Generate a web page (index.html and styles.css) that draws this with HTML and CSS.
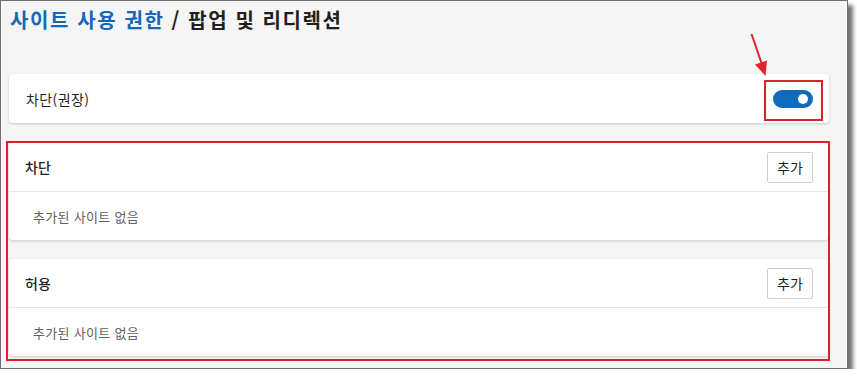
FILE: index.html
```html
<!DOCTYPE html>
<html lang="ko">
<head>
<meta charset="utf-8">
<title>팝업 및 리디렉션</title>
<link rel="stylesheet" href="styles.css">
</head>
<body>
<div class="window">
  <h1 class="title"><span class="crumb">사이트 사용 권한</span> / 팝업 및 리디렉션</h1>

  <div class="card setting">
    <span class="setting-label">차단(권장)</span>
    <span class="toggle" role="switch" aria-checked="true"><span class="knob"></span></span>
  </div>

  <section class="card list first">
    <div class="list-head">
      <span class="list-title">차단</span>
      <button class="add-btn" type="button">추가</button>
    </div>
    <div class="list-body">추가된 사이트 없음</div>
  </section>

  <section class="card list second">
    <div class="list-head">
      <span class="list-title">허용</span>
      <button class="add-btn" type="button">추가</button>
    </div>
    <div class="list-body">추가된 사이트 없음</div>
  </section>

  <div class="mark mark-toggle"></div>
  <div class="mark mark-lists"></div>
  <svg class="arrow" width="30" height="50" viewBox="745 34 30 50" aria-hidden="true">
    <line x1="751.5" y1="34" x2="761.5" y2="63" stroke="#e0242b" stroke-width="2"/>
    <polygon points="765.5,76 767,60.5 755,64.6" fill="#e0242b"/>
  </svg>
</div>
</body>
</html>
```

FILE: styles.css
```css
* { box-sizing: border-box; }

html, body {
  margin: 0;
  padding: 0;
  background: #ffffff;
}

body {
  font-family: "Noto Sans CJK KR", "Noto Sans", sans-serif;
  color: #1f1f1f;
}

.window {
  position: relative;
  width: 848px;
  height: 369px;
  border: 1px solid #707070;
  background: #f5f5f5;
  box-shadow: 5px 5px 4px rgba(0, 0, 0, 0.55);
  padding: 5px 18px 0 8px;
  overflow: visible;
}

.title {
  margin: 0;
  padding-left: 1px;
  font-size: 20px;
  line-height: 28px;
  font-weight: 700;
  letter-spacing: 1.6px;
  color: #1f1f1f;
  white-space: nowrap;
}

.crumb {
  color: #1667b7;
}

.card {
  background: #ffffff;
  border-radius: 4px;
  box-shadow: 0 1px 3px rgba(0, 0, 0, 0.18);
}

.setting {
  margin-top: 40px;
  height: 49px;
  display: flex;
  align-items: center;
  justify-content: space-between;
  padding: 0 16px 0 17px;
}

.setting-label {
  font-size: 14px;
  line-height: 20px;
  letter-spacing: 0.4px;
}

.toggle {
  position: relative;
  display: block;
  width: 40px;
  height: 18px;
  border-radius: 9px;
  background: #0f6cbd;
}

.knob {
  position: absolute;
  right: 5px;
  top: 4px;
  width: 10px;
  height: 10px;
  border-radius: 50%;
  background: #ffffff;
}

.list.first { margin-top: 20px; }
.list.second { margin-top: 19px; }

.list-head {
  height: 49px;
  display: flex;
  align-items: center;
  justify-content: space-between;
  padding: 0 16px 0 16px;
  border-bottom: 1px solid #e6e6e6;
}

.list-title {
  font-size: 14px;
  line-height: 20px;
  font-weight: 500;
}

.add-btn {
  width: 46px;
  height: 31px;
  padding: 0;
  border: 1px solid #cfcfcf;
  border-radius: 2px;
  background: #ffffff;
  font-family: inherit;
  font-size: 14px;
  line-height: 20px;
  color: #1f1f1f;
}

.list-body {
  height: 48px;
  display: flex;
  align-items: center;
  padding-left: 24px;
  font-size: 13px;
  letter-spacing: 0.3px;
  color: #616161;
}

.mark {
  position: absolute;
  border: 2px solid #d8232a;
}

.mark-toggle {
  left: 763px;
  top: 79px;
  width: 59px;
  height: 41px;
}

.mark-lists {
  left: 5px;
  top: 140px;
  width: 824px;
  height: 220px;
}

.arrow {
  position: absolute;
  left: 744px;
  top: 33px;
}
```
